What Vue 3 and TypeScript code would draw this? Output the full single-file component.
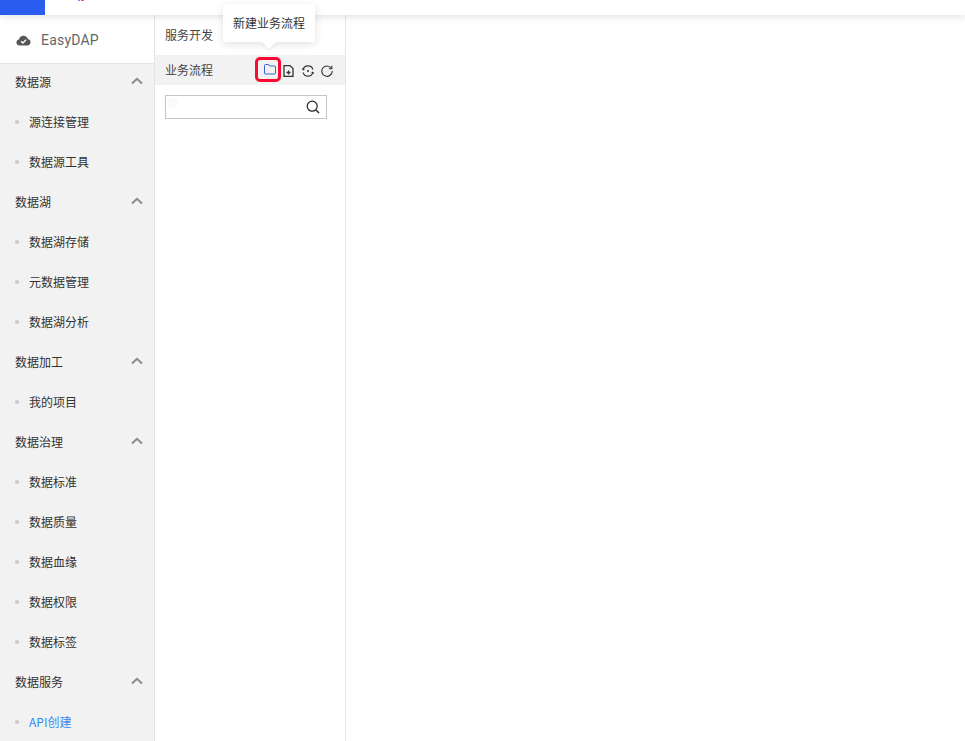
<script setup lang="ts">
interface Group { title: string; items: string[] }
const groups: Group[] = [
  { title: '数据源', items: ['源连接管理', '数据源工具'] },
  { title: '数据湖', items: ['数据湖存储', '元数据管理', '数据湖分析'] },
  { title: '数据加工', items: ['我的项目'] },
  { title: '数据治理', items: ['数据标准', '数据质量', '数据血缘', '数据权限', '数据标签'] },
  { title: '数据服务', items: ['API创建'] },
]
const activeItem = 'API创建'
</script>

<template>
  <div class="page">
    <header class="topbar">
      <div class="brand-block"></div>
      <div class="top-mark"><i class="mark-blue"></i><i class="mark-red"></i></div>
    </header>
    <div class="body">
      <aside class="sidebar">
        <div class="logo">
          <svg class="logo-icon" width="15" height="11" viewBox="0 0 16 12">
            <path d="M4 11.500C1.800 11.500.3 10 .3 8.200.3 6.500 1.500 5.200 3.100 5 3.500 2.400 5.500.7 8 .7c2.300 0 4.200 1.500 4.800 3.700 1.700.3 2.900 1.800 2.900 3.500 0 2-1.600 3.600-3.600 3.600z" fill="#555"/>
            <path d="M5.300 6.800l2 1.900 3.500-3.500" fill="none" stroke="#fff" stroke-width="1.500"/>
          </svg>
          <span class="logo-text">EasyDAP</span>
        </div>
        <nav class="menu">
          <div class="menu-list">
            <template v-for="g in groups" :key="g.title">
              <div class="group-title">
                <span>{{ g.title }}</span>
                <svg width="12" height="8" viewBox="0 0 12 8"><path d="M1 6.500L6 1.800l5 4.700" fill="none" stroke="#8a8a8a" stroke-width="2"/></svg>
              </div>
              <div v-for="it in g.items" :key="it" class="menu-item" :class="{ active: it === activeItem }">
                <i class="dot"></i><span>{{ it }}</span>
              </div>
            </template>
          </div>
        </nav>
      </aside>
      <section class="panel">
        <div class="panel-title">服务开发</div>
        <div class="flow-row">
          <span class="flow-label">业务流程</span>
          <div class="tools">
            <span class="tool-highlight">
              <svg width="12" height="11" viewBox="0 0 12 11"><path d="M.5 1.500a1 1 0 0 1 1-1h3l1.200 1.500h4.800a1 1 0 0 1 1 1v6a1 1 0 0 1-1 1h-9a1 1 0 0 1-1-1z" fill="none" stroke="#3a62e0" stroke-width="1"/></svg>
            </span>
            <svg class="t-file" width="11" height="12" viewBox="0 0 11 12"><path d="M1 .6h6l3 3v7.800H1z" fill="none" stroke="#333" stroke-width="1.300"/><path d="M3.500 7.500h4M5.500 5.500v4" stroke="#333" stroke-width="1.300"/></svg>
            <svg class="t-sync" width="12" height="12" viewBox="0 0 12 12"><path d="M1 4.600A5.200 5.200 0 0 1 11 4.600M11 7.400A5.200 5.200 0 0 1 1 7.400" fill="none" stroke="#333" stroke-width="1.100"/><path d="M.2 3.400L1 5l1.600-.8M11.800 8.600L11 7l-1.600.8" fill="none" stroke="#333" stroke-width="1"/><circle cx="6" cy="6" r="1" fill="#333"/></svg>
            <svg class="t-refresh" width="12" height="12" viewBox="0 0 12 12"><path d="M10.300 3.200A5.200 5.200 0 1 0 11.200 6" fill="none" stroke="#333" stroke-width="1.100"/><path d="M10.800 .8v3H7.800" fill="none" stroke="#333" stroke-width="1.100"/></svg>
          </div>
        </div>
        <div class="search">
          <i class="search-blot"></i>
          <svg width="14" height="14" viewBox="0 0 14 14"><circle cx="6.200" cy="6.200" r="5" fill="none" stroke="#222" stroke-width="1.200"/><path d="M10 10l3 3" stroke="#222" stroke-width="1.400"/></svg>
        </div>
        <div class="tooltip"><span class="tooltip-text">新建业务流程</span></div>
      </section>
      <main class="content"></main>
    </div>
  </div>
</template>

<style>
html, body { margin: 0; background: #fff; }
</style>

<style scoped>
.page { width: 965px; height: 741px; overflow: hidden; display: flex; flex-direction: column; font-family: "Noto Sans CJK SC", "Liberation Sans", sans-serif; font-size: 12px; color: #333; background: #fff; }
.topbar { height: 15px; flex: none; display: flex; background: #fff; box-shadow: 0 1px 8px rgba(0,0,0,.14); position: relative; z-index: 2; }
.brand-block { width: 45px; background: #2a5cf0; }
.top-mark { margin-left: 33px; display: flex; height: 1px; gap: 1px; }
.mark-blue { width: 2px; background: #6a8ae0; }
.mark-red { width: 3px; background: #f0605a; }
.body { flex: 1; display: flex; min-height: 0; }
.sidebar { width: 155px; flex: none; box-sizing: border-box; border-right: 1px solid #e4e4e4; display: flex; flex-direction: column; background: #f2f2f2; overflow: hidden; }
.logo { height: 49px; flex: none; box-sizing: border-box; border-bottom: 1px solid #e4e4e4; background: #fff; display: flex; align-items: center; padding: 2px 0 0 16px; gap: 10px; position: relative; z-index: 1; }
.logo-text { font-family: Roboto, "Liberation Sans", sans-serif; font-size: 14px; color: #666; letter-spacing: .2px; }
.menu { flex: 1; min-height: 0; }
.menu-list { margin-top: -3px; }
.group-title { height: 40px; display: flex; align-items: center; justify-content: space-between; padding: 0 11px 0 15px; color: #333; }
.menu-item { height: 40px; display: flex; align-items: center; padding-left: 15px; gap: 10px; color: #333; }
.menu-item.active { color: #2f8af5; }
.dot { width: 4px; height: 4px; margin-top: 2px; border-radius: 50%; background: #cacaca; }
.panel { width: 191px; flex: none; box-sizing: border-box; border-right: 1px solid #e6e6e6; position: relative; }
.panel-title { height: 40px; display: flex; align-items: center; padding: 0 0 2px 10px; box-sizing: border-box; color: #444; }
.flow-row { height: 30px; background: #f2f2f2; display: flex; align-items: center; justify-content: space-between; padding-left: 10px; color: #444; }
.flow-label { margin-top: -2px; }
.tools { display: flex; align-items: center; margin-right: 12px; gap: 7px; }
.tools > svg { margin-top: 2px; }
.tool-highlight { width: 20px; height: 19px; margin: -1px -5px 0 0; border: 3px solid #fa0a32; border-radius: 5px; display: flex; align-items: center; justify-content: center; }
.tool-highlight svg { margin-left: 3px; }
.t-file { margin-right: 1px; }
.search { width: 162px; height: 24px; box-sizing: border-box; margin: 10px 0 0 10px; border: 1px solid #c4c4c4; display: flex; align-items: center; justify-content: flex-end; padding-right: 6px; position: relative; }
.search-blot { position: absolute; left: 1px; top: 1px; width: 11px; height: 11px; border-radius: 50%; background: #fafafa; }
.tooltip { position: absolute; left: 68px; top: -11px; width: 92px; height: 38px; box-sizing: border-box; background: #fff; border-radius: 2px; box-shadow: 0 2px 8px rgba(0,0,0,.12); display: flex; align-items: center; justify-content: center; color: #333; z-index: 3; }
.tooltip-text { margin-top: -2px; }
.tooltip::after { content: ""; position: absolute; left: 41px; bottom: -5px; width: 10px; height: 10px; background: #fff; transform: rotate(45deg); box-shadow: 2px 2px 3px rgba(0,0,0,.05); }
.content { flex: 1; background: #fff; }
</style>
